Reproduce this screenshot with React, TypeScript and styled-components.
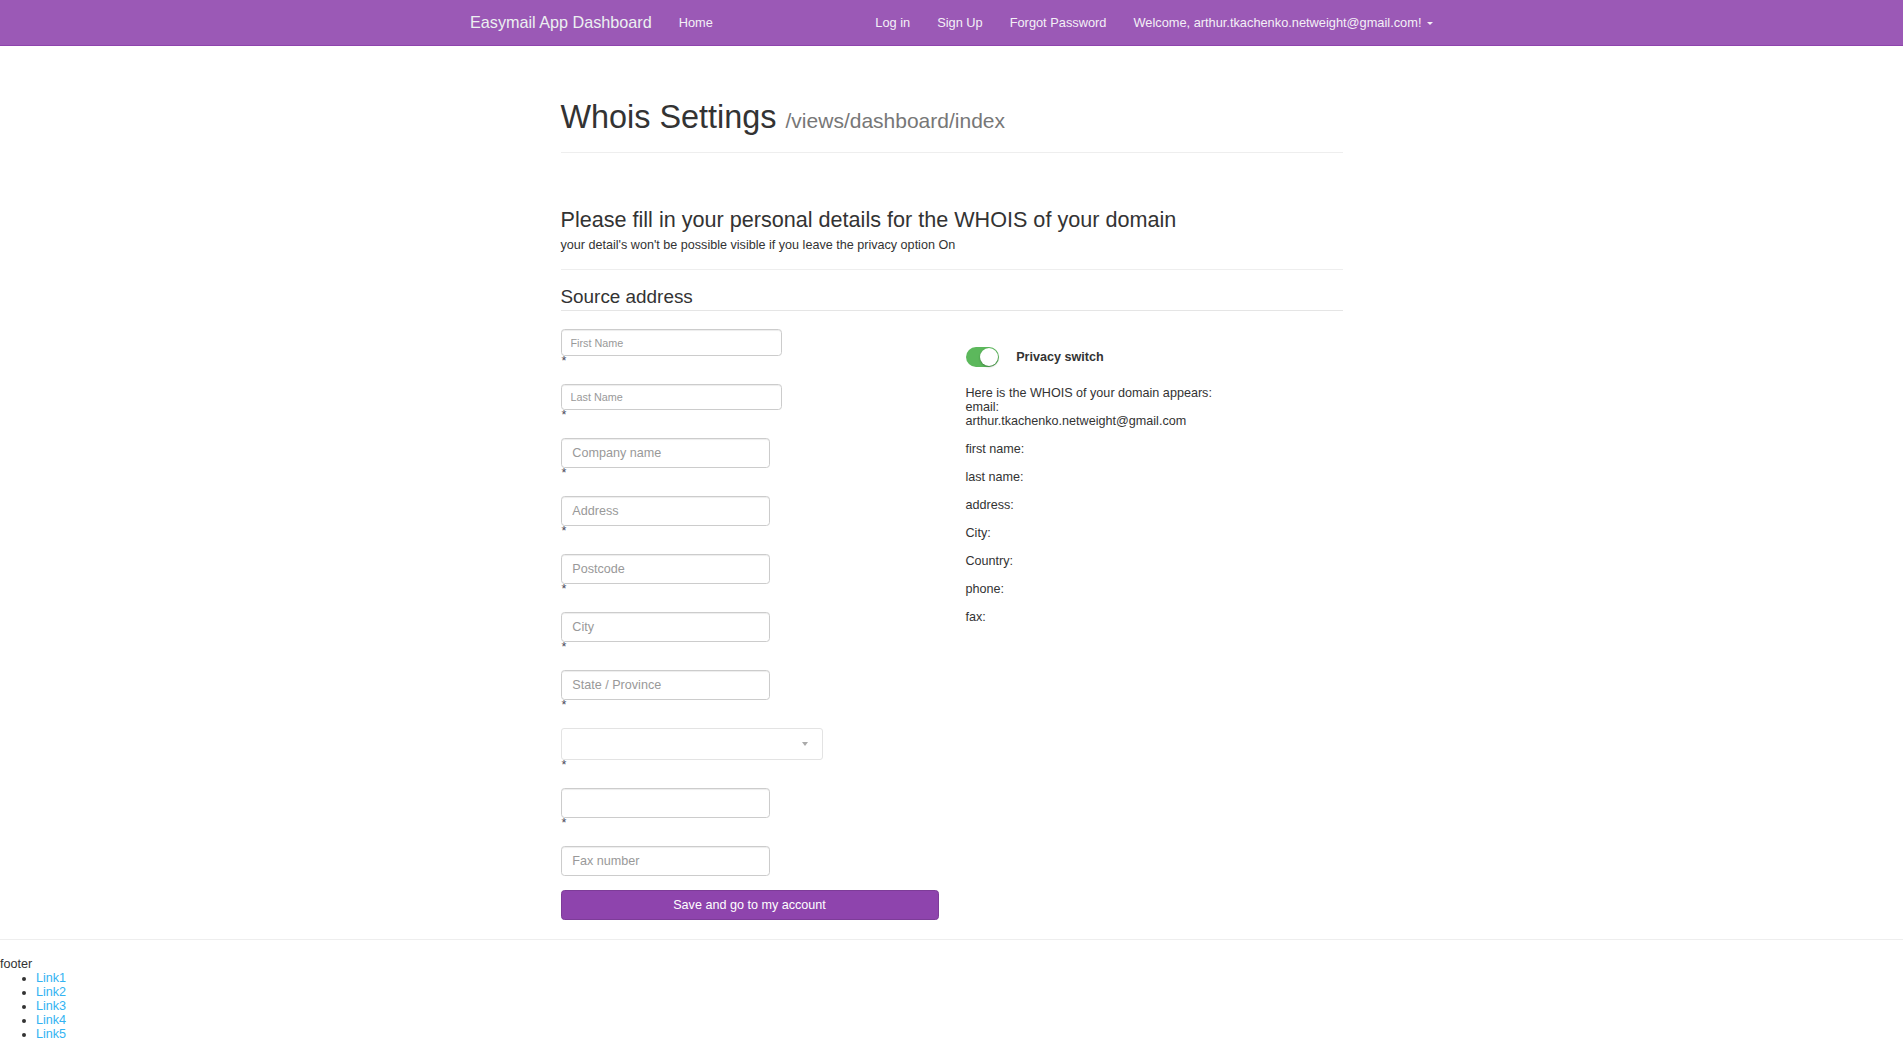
import React from 'react';
import styled, { createGlobalStyle } from 'styled-components';

const GlobalStyle = createGlobalStyle`
  * {
    box-sizing: border-box;
  }

  body {
    margin: 0;
    background: #fff;
    color: #333;
    font-family: "Liberation Sans", Arial, sans-serif;
    font-size: 12.6px;
    line-height: 18px;
  }
`;

const whoisFields = ['first name:', 'last name:', 'address:', 'City:', 'Country:', 'phone:', 'fax:'];
const footerLinks = ['Link1', 'Link2', 'Link3', 'Link4', 'Link5'];

const App = () => {
  return (
    <>
      <GlobalStyle />
      <Navbar>
        <NavInner>
          <Brand href='#'>Easymail App Dashboard</Brand>
          <NavList>
            <NavItem href='#'>Home</NavItem>
          </NavList>
          <NavList $right>
            <NavItem href='#'>Log in</NavItem>
            <NavItem href='#'>Sign Up</NavItem>
            <NavItem href='#'>Forgot Password</NavItem>
            <NavItem href='#'>
              Welcome, arthur.tkachenko.netweight@gmail.com! <Caret />
            </NavItem>
          </NavList>
        </NavInner>
      </Navbar>

      <Main>
        <PageHeader>
          <Title>
            Whois Settings <Sub>/views/dashboard/index</Sub>
          </Title>
        </PageHeader>

        <Lead>Please fill in your personal details for the WHOIS of your domain</Lead>
        <Note>your detail's won't be possible visible if you leave the privacy option On</Note>
        <Divider />

        <Legend>Source address</Legend>

        <Row>
          <FormCol>
            <Field>
              <Input $size='sm' $width={221} placeholder='First Name' />
              <Required>*</Required>
            </Field>
            <Field>
              <Input $size='sm' $width={221} placeholder='Last Name' />
              <Required>*</Required>
            </Field>
            <Field>
              <Input $width={209} placeholder='Company name' />
              <Required>*</Required>
            </Field>
            <Field>
              <Input $width={209} placeholder='Address' />
              <Required>*</Required>
            </Field>
            <Field>
              <Input $width={209} placeholder='Postcode' />
              <Required>*</Required>
            </Field>
            <Field>
              <Input $width={209} placeholder='City' />
              <Required>*</Required>
            </Field>
            <Field>
              <Input $width={209} placeholder='State / Province' />
              <Required>*</Required>
            </Field>
            <Field>
              <SelectBox>
                <SelectArrow />
              </SelectBox>
              <Required>*</Required>
            </Field>
            <Field>
              <Input $width={209} />
              <Required>*</Required>
            </Field>
            <Input $width={209} placeholder='Fax number' />
            <SaveButton type='button'>Save and go to my account</SaveButton>
          </FormCol>

          <InfoCol>
            <SwitchRow>
              <Toggle>
                <Knob />
              </Toggle>
              <SwitchLabel>Privacy switch</SwitchLabel>
            </SwitchRow>
            <InfoIntro>
              Here is the WHOIS of your domain appears:
              <br />
              email:
              <br />
              arthur.tkachenko.netweight@gmail.com
            </InfoIntro>
            {whoisFields.map((field) => (
              <InfoLine key={field}>{field}</InfoLine>
            ))}
          </InfoCol>
        </Row>
      </Main>

      <Footer>
        footer
        <FooterList>
          {footerLinks.map((link) => (
            <li key={link}>
              <FooterLink href='#'>{link}</FooterLink>
            </li>
          ))}
        </FooterList>
      </Footer>
    </>
  );
};

const Navbar = styled.nav`
  height: 46px;
  background: #9b59b6;
  border-bottom: 1px solid #8e44ad;
`;

const NavInner = styled.div`
  width: 990px;
  height: 45px;
  margin: 0 auto;
  display: flex;
  align-items: center;
`;

const Brand = styled.a`
  padding: 0 13.5px;
  color: #ecf0f1;
  font-size: 16.2px;
  line-height: 45px;
  text-decoration: none;
`;

const NavList = styled.div<{ $right?: boolean }>`
  display: flex;
  align-items: center;
  margin-left: ${({ $right }) => ($right ? 'auto' : '0')};
`;

const NavItem = styled.a`
  display: flex;
  align-items: center;
  padding: 0 13.5px;
  color: #f4f0f6;
  font-size: 12.8px;
  line-height: 45px;
  text-decoration: none;
  white-space: pre;
`;

const Caret = styled.span`
  display: inline-block;
  width: 0;
  height: 0;
  margin-left: 2px;
  margin-top: 2px;
  border-top: 3.6px solid #f4f0f6;
  border-left: 3.6px solid transparent;
  border-right: 3.6px solid transparent;
`;

const Main = styled.main`
  width: 782px;
  margin: 53.5px auto 0;
`;

const PageHeader = styled.div`
  padding-bottom: 16.5px;
  border-bottom: 1px solid #eee;
`;

const Title = styled.h1`
  margin: 0;
  font-size: 32.4px;
  font-weight: 500;
  line-height: 35.6px;
  color: #333;
`;

const Sub = styled.small`
  font-size: 21px;
  font-weight: 400;
  line-height: 1;
  color: #777;
`;

const Lead = styled.h3`
  margin: 55px 0 0;
  font-size: 21.6px;
  font-weight: 500;
  line-height: 23.8px;
  color: #333;
`;

const Note = styled.p`
  margin: 4.6px 0 0;
  line-height: 18px;
`;

const Divider = styled.hr`
  margin: 15.3px 0 0;
  border: 0;
  border-top: 1px solid #eee;
`;

const Legend = styled.div`
  margin: 10.6px 0 18px;
  padding-top: 3.4px;
  font-size: 18.9px;
  line-height: 26px;
  color: #333;
  border-bottom: 1px solid #e5e5e5;
`;

const Row = styled.div`
  display: grid;
  grid-template-columns: 405px 1fr;
`;

const FormCol = styled.form`
  display: flex;
  flex-direction: column;
  align-items: flex-start;
`;

const Field = styled.div`
  display: flex;
  flex-direction: column;
  align-items: flex-start;
  margin-bottom: 18px;
`;

const Input = styled.input<{ $size?: 'sm'; $width: number }>`
  width: ${({ $width }) => $width}px;
  height: ${({ $size }) => ($size === 'sm' ? '26.5px' : '30px')};
  padding: 0 ${({ $size }) => ($size === 'sm' ? '9px' : '10.8px')};
  font-family: inherit;
  font-size: ${({ $size }) => ($size === 'sm' ? '10.8px' : '12.6px')};
  color: #555;
  background: #fff;
  border: 1px solid #ccc;
  border-radius: 3.6px;
  box-shadow: inset 0 1px 1px rgba(0, 0, 0, 0.075);
  outline: none;

  &::placeholder {
    color: #999;
  }
`;

const Required = styled.span`
  display: block;
  height: 10px;
  padding-left: 1px;
  font-size: 12.6px;
  line-height: 10px;
  color: #4a4a5a;
`;

const SelectBox = styled.div`
  position: relative;
  width: 262px;
  height: 31.4px;
  background: #fff;
  border: 1px solid #e3e3e3;
  border-radius: 3px;
`;

const SelectArrow = styled.span`
  position: absolute;
  right: 14px;
  top: 13px;
  width: 0;
  height: 0;
  border-top: 4px solid #aaa;
  border-left: 3.5px solid transparent;
  border-right: 3.5px solid transparent;
`;

const SaveButton = styled.button`
  width: 378px;
  height: 30px;
  margin-top: 14.3px;
  padding: 0;
  font-family: inherit;
  font-size: 12.6px;
  color: #fff;
  background: #8e44ad;
  border: 1px solid #7d3c98;
  border-radius: 3.6px;
  cursor: pointer;
`;

const InfoCol = styled.div`
  display: flex;
  flex-direction: column;
  padding-top: 17.7px;
`;

const SwitchRow = styled.div`
  display: flex;
  align-items: center;
  gap: 17.7px;
  height: 20px;
`;

const Toggle = styled.span`
  position: relative;
  display: block;
  width: 33px;
  height: 20px;
  background: #5cb85c;
  border-radius: 10px;
`;

const Knob = styled.span`
  position: absolute;
  right: 1px;
  top: 1px;
  width: 18px;
  height: 18px;
  background: #fff;
  border-radius: 50%;
  box-shadow: 0 1px 2px rgba(0, 0, 0, 0.3);
`;

const SwitchLabel = styled.span`
  font-weight: 700;
  color: #333;
`;

const InfoIntro = styled.p`
  margin: 19.5px 0 0;
  line-height: 14px;
`;

const InfoLine = styled.p`
  margin: 14px 0 0;
  line-height: 14px;
`;

const Footer = styled.footer`
  margin-top: 19px;
  padding-top: 17.5px;
  border-top: 1px solid #eee;
  line-height: 14px;
  color: #333;
`;

const FooterList = styled.ul`
  margin: 0;
  padding-left: 36px;
`;

const FooterLink = styled.a`
  color: #33b3f2;
  text-decoration: none;
`;

export default App;
